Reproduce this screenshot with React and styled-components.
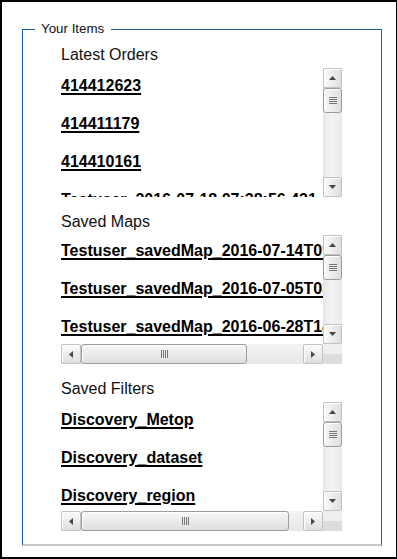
import styled, { createGlobalStyle } from 'styled-components'

const GlobalStyle = createGlobalStyle`
	html, body {
		margin: 0;
		padding: 0;
		background: #fff;
	}
	body {
		font-family: "Liberation Sans", Arial, sans-serif;
		color: #000;
	}
`

const orders = ['414412623', '414411179', '414410161', 'Testuser_2016-07-18 07:38:56.431']
const maps = [
	'Testuser_savedMap_2016-07-14T09:21:47',
	'Testuser_savedMap_2016-07-05T08:55:12',
	'Testuser_savedMap_2016-06-28T14:02:39',
]
const filters = ['Discovery_Metop', 'Discovery_dataset', 'Discovery_region']

const arrowPoints = {
	up: '0,4 3.5,0 7,4',
	down: '0,0 7,0 3.5,4',
	left: '4,0 4,7 0,3.5',
	right: '0,0 0,7 4,3.5',
}

function Arrow({ dir }) {
	const vertical = dir === 'up' || dir === 'down'
	const w = vertical ? 7 : 4
	const h = vertical ? 4 : 7
	return (
		<svg width={w} height={h} viewBox={`0 0 ${w} ${h}`}>
			<polygon points={arrowPoints[dir]} fill="#474747" />
		</svg>
	)
}

function ScrollBox({ items, shift = 9, thumb }) {
	const hasH = thumb !== undefined
	return (
		<Box $h={hasH}>
			<Content $shift={shift}>
				{items.map(e => (
					<Item key={e}>
						<Link href="#">{e}</Link>
					</Item>
				))}
			</Content>
			<VBar>
				<Btn $v>
					<Arrow dir="up" />
				</Btn>
				<Thumb $v>
					<Grip $v />
				</Thumb>
				<Track />
				<Btn $v>
					<Arrow dir="down" />
				</Btn>
			</VBar>
			{hasH && (
				<>
					<HBar>
						<Btn>
							<Arrow dir="left" />
						</Btn>
						<Thumb $w={thumb}>
							<Grip />
						</Thumb>
						<Track />
						<Btn>
							<Arrow dir="right" />
						</Btn>
					</HBar>
					<Corner />
				</>
			)}
		</Box>
	)
}

function App() {
	return (
		<>
			<GlobalStyle />
			<Frame>
				<Fieldset>
					<Legend>Your Items</Legend>
					<Inner>
						<Section>
							<Title>Latest Orders</Title>
							<ScrollBox items={orders} />
						</Section>
						<Section>
							<Title>Saved Maps</Title>
							<ScrollBox items={maps} shift={7} thumb={166} />
						</Section>
						<Section>
							<Title>Saved Filters</Title>
							<ScrollBox items={filters} thumb={208} />
						</Section>
					</Inner>
				</Fieldset>
			</Frame>
		</>
	)
}
export default App

const Frame = styled.div`
	box-sizing: border-box;
	width: 397px;
	height: 559px;
	border: 2px solid #000;
	border-right-width: 1px;
	padding: 19px 0 0 20px;
`
const Fieldset = styled.fieldset`
	box-sizing: border-box;
	width: 360px;
	margin: 0;
	padding: 9px 39px 13px 12px;
	border: 1px solid #1f5c99;
	border-bottom: 2px solid #c8c8c8;
	min-inline-size: 0;
`
const Legend = styled.legend`
	padding: 0 7px 0 6px;
	font-size: 13.33px;
	line-height: 16px;
	color: #111;
`
const Inner = styled.div`
	padding-left: 26px;
	display: flex;
	flex-direction: column;
	gap: 15px;
`
const Section = styled.div`
	display: flex;
	flex-direction: column;
	gap: 4px;
	padding-top: 1px;
	&:first-child {
		padding-top: 0;
	}
`
const Title = styled.div`
	font-size: 16px;
	line-height: 18px;
	color: #111;
`
const Box = styled.div`
	display: grid;
	grid-template-columns: minmax(0, 1fr) 19px;
	grid-template-rows: minmax(0, 1fr) ${p => (p.$h ? '20px' : '0px')};
	height: 129px;
`
const Content = styled.div`
	overflow: hidden;
	white-space: nowrap;
	padding-top: ${p => p.$shift}px;
`
const Item = styled.div`
	line-height: 18px;
	padding-bottom: 20px;
`
const Link = styled.a`
	font-size: 16px;
	font-weight: bold;
	color: #000;
	text-decoration: underline;
	text-decoration-thickness: 2px;
	text-underline-offset: 2px;
`
const VBar = styled.div`
	display: flex;
	flex-direction: column;
	background: linear-gradient(to right, #e6e6e6, #f4f4f4 45%, #eaeaea);
`
const HBar = styled.div`
	display: flex;
	background: linear-gradient(#f4f4f4, #e7e7e7);
`
const Btn = styled.div`
	box-sizing: border-box;
	flex: none;
	width: ${p => (p.$v ? '100%' : '20px')};
	height: ${p => (p.$v ? '20px' : '100%')};
	border: 1px solid #c2c2c2;
	border-radius: 2px;
	background: linear-gradient(${p => (p.$v ? 'to right' : 'to bottom')}, #fbfbfb, #dedede);
	box-shadow: inset 1px 1px 0 #fff;
	display: flex;
	align-items: center;
	justify-content: center;
`
const Thumb = styled.div`
	box-sizing: border-box;
	flex: none;
	width: ${p => (p.$v ? '100%' : `${p.$w}px`)};
	height: ${p => (p.$v ? '25px' : '100%')};
	border: 1px solid #9c9c9c;
	border-radius: 3px;
	background: linear-gradient(${p => (p.$v ? 'to right' : 'to bottom')}, #f8f8f8, #dedede);
	box-shadow: inset 1px 1px 0 #fff;
	display: flex;
	align-items: center;
	justify-content: center;
`
const Grip = styled.span`
	width: ${p => (p.$v ? '8px' : '7px')};
	height: ${p => (p.$v ? '7px' : '8px')};
	background: repeating-linear-gradient(
		${p => (p.$v ? 'to bottom' : 'to right')},
		#767676 0 1px,
		transparent 1px 2px
	);
`
const Track = styled.div`
	flex: 1;
`
const Corner = styled.div`
	background: linear-gradient(#efefef 50%, #dcdcdc 50%);
`
